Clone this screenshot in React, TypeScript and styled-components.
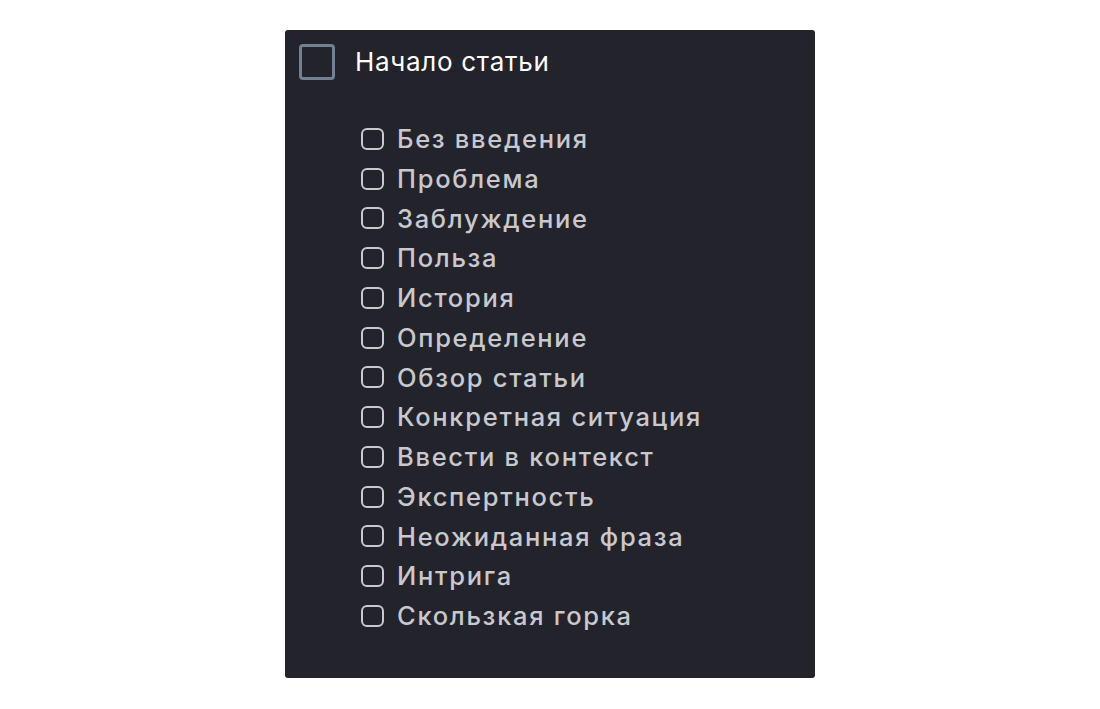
import React from "react";
import styled, { createGlobalStyle } from "styled-components";

const Global = createGlobalStyle`
  html, body { margin: 0; padding: 0; background: #ffffff; }
  body { font-family: Inter, "Liberation Sans", Arial, sans-serif; }
`;

const Page = styled.div`
  display: flex;
  justify-content: center;
  padding-top: 30px;
`;

const Panel = styled.div`
  width: 530px;
  height: 648px;
  box-sizing: border-box;
  background: #23232b;
  border-radius: 3px;
  padding: 13px 0 0 14px;
`;

const Header = styled.label`
  display: flex;
  align-items: center;
  gap: 20px;
  height: 37px;
`;

const BigBox = styled.span`
  width: 36px;
  height: 36px;
  box-sizing: border-box;
  border: 3px solid #718193;
  border-radius: 4px;
  flex: none;
`;

const HeaderText = styled.span`
  color: #ffffff;
  font-size: 26px;
  line-height: 1;
  letter-spacing: 0.7px;
`;

const List = styled.ul`
  list-style: none;
  margin: 0;
  padding: 39px 0 0 62px;
  display: flex;
  flex-direction: column;
`;

const Item = styled.li`
  display: flex;
  align-items: center;
  gap: 13px;
  height: 39.75px;
`;

const SmallBox = styled.span`
  width: 23px;
  height: 22px;
  box-sizing: border-box;
  border: 2px solid #c9c9ce;
  border-radius: 6px;
  flex: none;
`;

const ItemText = styled.span`
  color: #c8c8ce;
  font-size: 25.5px;
  font-weight: 500;
  line-height: 1;
  letter-spacing: 1.7px;
`;

const items = [
  "Без введения",
  "Проблема",
  "Заблуждение",
  "Польза",
  "История",
  "Определение",
  "Обзор статьи",
  "Конкретная ситуация",
  "Ввести в контекст",
  "Экспертность",
  "Неожиданная фраза",
  "Интрига",
  "Скользкая горка",
];

export default function App() {
  return (
    <>
      <Global />
      <Page>
        <Panel>
          <Header>
            <BigBox />
            <HeaderText>Начало статьи</HeaderText>
          </Header>
          <List>
            {items.map((t) => (
              <Item key={t}>
                <SmallBox />
                <ItemText>{t}</ItemText>
              </Item>
            ))}
          </List>
        </Panel>
      </Page>
    </>
  );
}
